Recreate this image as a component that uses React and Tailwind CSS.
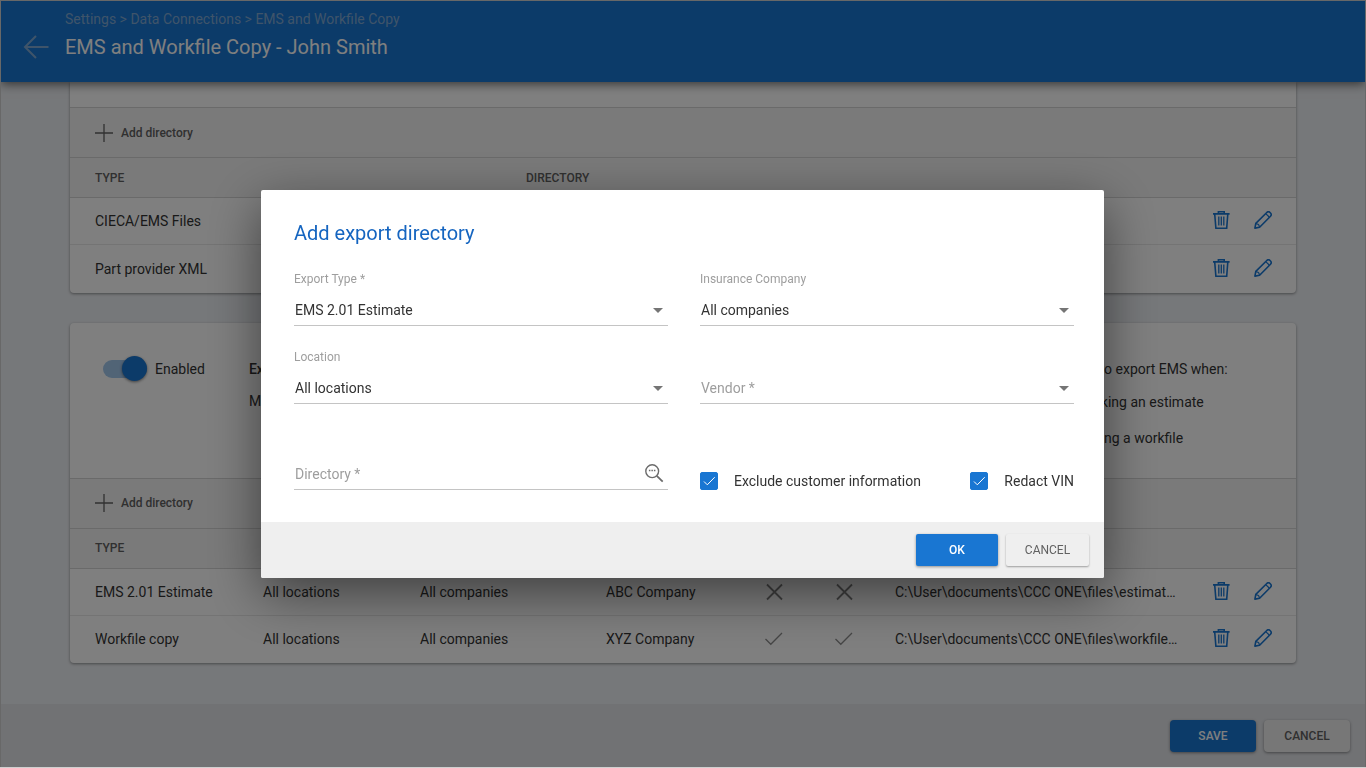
import React, { useState } from "react";

const exportRows = [
  { type: "EMS 2.01 Estimate", location: "All locations", insurance: "All companies", vendor: "ABC Company", exclude: false, redact: false, directory: "C:\\User\\documents\\CCC ONE\\files\\estimates\\export" },
  { type: "Workfile copy", location: "All locations", insurance: "All companies", vendor: "XYZ Company", exclude: true, redact: true, directory: "C:\\User\\documents\\CCC ONE\\files\\workfiles\\export" },
];

const importRows = [
  { type: "CIECA/EMS Files", directory: "C:\\User\\documents\\CCC ONE\\ems" },
  { type: "Part provider XML", directory: "C:\\User\\documents\\CCC ONE\\xml" },
];

const TrashIcon = () => (
  <svg width="17" height="18" viewBox="0 0 17 18" fill="none" stroke="currentColor" strokeWidth="1.6">
    <path d="M0 2.9h16.6M5.4 2.7V.8h5.8v1.9M1.7 3l1.2 14.2h10.8L14.8 3" />
    <path d="M5.8 5.5v9M8.3 5.5v9M10.8 5.5v9" strokeWidth="1.3" />
  </svg>
);

const PencilIcon = () => (
  <svg width="18" height="18" viewBox="0 0 18 18" fill="none" stroke="currentColor" strokeWidth="1.6" strokeLinejoin="round">
    <path d="M.9 17.1l.9-4.7L12.8 1.5a2.3 2.3 0 0 1 3.2 0l.5.5a2.3 2.3 0 0 1 0 3.2L5.6 16.2z" />
    <path d="M12 2.8l3.2 3.2M1.9 12.6l2 .6 1 1 .6 1.9" strokeWidth="1.2" />
  </svg>
);

const CrossIcon = () => (
  <svg className="mx-auto" width="20" height="20" viewBox="0 0 20 20" fill="none" stroke="#808080" strokeWidth="1.8">
    <path d="M3 2.5l15 15M18 2.5L3 17.5" />
  </svg>
);

const TickIcon = () => (
  <svg className="mx-auto" width="20" height="20" viewBox="0 0 20 20" fill="none" stroke="#8c8c8c" strokeWidth="1.3">
    <path d="M1.5 10l5.3 5.3L18 4" />
  </svg>
);

const RowActions = () => (
  <div className="flex items-center justify-end gap-6 pr-6 pb-0.5 text-[#1976d2]">
    <button type="button" aria-label="Delete" className="cursor-pointer"><TrashIcon /></button>
    <button type="button" aria-label="Edit" className="cursor-pointer"><PencilIcon /></button>
  </div>
);

const AddDirectory = () => (
  <div className="flex h-[50px] items-center border-t border-[#d4d4d4] bg-[#f5f5f5] pl-[25px]">
    <button type="button" className="flex cursor-pointer items-center gap-2 text-xs font-medium text-[#616161]">
      <svg width="18" height="18" viewBox="0 0 18 18" stroke="#616161" strokeWidth="1.3">
        <path d="M9 0v18M0 9h18" />
      </svg>
      Add directory
    </button>
  </div>
);

const SelectField = ({ id, label, value, options, onChange, placeholder }) => (
  <div className="flex flex-col justify-end">
    <label htmlFor={id} className={placeholder ? "sr-only" : "text-xs text-[#9e9e9e]"}>{label}</label>
    <div className="relative mt-2">
      <select
        id={id}
        value={value}
        onChange={(e) => onChange(e.target.value)}
        className={`h-[31px] w-full appearance-none border-b border-[#c4c4c4] bg-transparent pl-px text-sm outline-none ${value ? "text-[#333]" : "text-[#9e9e9e]"}`}
      >
        {placeholder && <option value="">{placeholder}</option>}
        {options.map((o) => <option key={o}>{o}</option>)}
      </select>
      <svg className="pointer-events-none absolute top-[13px] right-[5px]" width="10" height="5" viewBox="0 0 10 5">
        <path d="M0 0h10L5 5z" fill="#757575" />
      </svg>
    </div>
  </div>
);

const CheckField = ({ label, checked, onChange }) => (
  <label className="flex cursor-pointer items-center gap-4 text-sm leading-[18px] text-[#333]">
    <span className="relative flex">
      <input
        type="checkbox"
        checked={checked}
        onChange={(e) => onChange(e.target.checked)}
        className="h-[18px] w-[18px] appearance-none rounded-xs border border-[#9e9e9e] checked:border-[#1976d2] checked:bg-[#1976d2]"
      />
      {checked && (
        <svg className="pointer-events-none absolute inset-0" width="18" height="18" viewBox="0 0 18 18" fill="none" stroke="#fff" strokeWidth="1">
          <path d="M4 9.5l3.3 3.3L14.7 5.2" />
        </svg>
      )}
    </span>
    {label}
  </label>
);

const App = () => {
  const [enabled, setEnabled] = useState(true);
  const [open, setOpen] = useState(true);
  const [form, setForm] = useState({
    exportType: "EMS 2.01 Estimate",
    insurance: "All companies",
    location: "All locations",
    vendor: "",
    directory: "",
    exclude: true,
    redact: true,
  });

  const update = (key) => (value) => setForm({ ...form, [key]: value });

  return (
    <div className="relative flex h-screen flex-col overflow-hidden border border-[#d0d0d0] bg-[#edf0f4] font-[Roboto,sans-serif] text-sm text-[#333]">
      <header className="relative z-10 flex h-[81px] shrink-0 items-start bg-[#1976d2] shadow-[0_2px_10px_rgba(0,0,0,0.6)]">
        <a href="#back" aria-label="Back" className="mt-[34px] ml-[22px] text-[#7fa9d4]">
          <svg width="26" height="24" viewBox="0 0 26 24" fill="none" stroke="currentColor" strokeWidth="2">
            <path d="M25.5 12H2M13 1L2 12l11 11" />
          </svg>
        </a>
        <div className="ml-4 pt-2">
          <nav className="text-sm text-[#7fa9d4]">
            <a href="#settings">Settings</a> &gt; <a href="#connections">Data Connections</a> &gt; <a href="#copy">EMS and Workfile Copy</a>
          </nav>
          <h1 className="mt-1 text-xl text-white">EMS and Workfile Copy - John Smith</h1>
        </div>
      </header>

      <main className="flex-1 overflow-hidden px-[69px]">
        <section className="overflow-hidden rounded-b bg-white shadow-[0_1px_3px_rgba(0,0,0,0.4)]">
          <div className="h-[25px]" />
          <AddDirectory />
          <table className="w-full table-fixed text-left">
            <thead>
              <tr className="h-10 border-y border-[#d4d4d4] bg-[#f5f5f5] text-xs text-[#616161]">
                <th className="w-[456px] pl-[25px] font-medium">TYPE</th>
                <th className="font-medium">DIRECTORY</th>
                <th className="w-[118px]" />
              </tr>
            </thead>
            <tbody>
              {importRows.map((row) => (
                <tr key={row.type} className="h-[47px] border-b border-[#e8e8e8] last:h-12 last:border-0">
                  <td className="pl-[25px]">{row.type}</td>
                  <td className="truncate">{row.directory}</td>
                  <td><RowActions /></td>
                </tr>
              ))}
            </tbody>
          </table>
        </section>

        <section className="mt-[30px] overflow-hidden rounded bg-white shadow-[0_1px_3px_rgba(0,0,0,0.4)]">
          <div className="flex h-[155px] items-start">
            <label className="mt-9 ml-[33px] flex cursor-pointer items-center gap-2">
              <input type="checkbox" checked={enabled} onChange={(e) => setEnabled(e.target.checked)} className="peer sr-only" />
              <span className="flex h-[18px] w-[44px] items-center justify-start rounded-full bg-[#bdbdbd] peer-checked:justify-end peer-checked:bg-[#a3c8ed]">
                <span className="h-[25px] w-[25px] rounded-full bg-[#1976d2] shadow-[0_1px_3px_rgba(0,0,0,0.5)]" />
              </span>
              Enabled
            </label>
            <div className="mt-9 ml-11 flex-1">
              <p className="font-medium">Export directories</p>
              <p className="mt-3">Manage where estimates and workfiles are copied.</p>
            </div>
            <div className="mt-9 w-[246px]">
              <p>Prompt to export EMS when:</p>
              <label className="mt-[13px] flex items-center gap-[10px]"><input type="checkbox" className="h-[18px] w-[18px]" />Locking an estimate</label>
              <label className="mt-4 flex items-center gap-[10px]"><input type="checkbox" className="h-[18px] w-[18px]" />Saving a workfile</label>
            </div>
          </div>
          <AddDirectory />
          <table className="w-full table-fixed text-left">
            <thead>
              <tr className="h-10 border-y border-[#d4d4d4] bg-[#f5f5f5] text-xs text-[#616161]">
                <th className="w-[193px] pl-[25px] font-medium">TYPE</th>
                <th className="w-[157px] font-medium">LOCATION</th>
                <th className="w-[186px] font-medium">INSURANCE</th>
                <th className="w-[133px] font-medium">VENDOR</th>
                <th className="w-[70px] text-center font-medium">EXCLUDE</th>
                <th className="w-[70px] text-center font-medium">REDACT</th>
                <th className="pl-4 font-medium">DIRECTORY</th>
                <th className="w-[118px]" />
              </tr>
            </thead>
            <tbody>
              {exportRows.map((row) => (
                <tr key={row.type} className="h-[47px] border-b border-[#e8e8e8] last:h-12 last:border-0">
                  <td className="pl-[25px]">{row.type}</td>
                  <td>{row.location}</td>
                  <td>{row.insurance}</td>
                  <td>{row.vendor}</td>
                  <td>{row.exclude ? <TickIcon /> : <CrossIcon />}</td>
                  <td>{row.redact ? <TickIcon /> : <CrossIcon />}</td>
                  <td className="truncate pl-4">{row.directory}</td>
                  <td><RowActions /></td>
                </tr>
              ))}
            </tbody>
          </table>
        </section>
      </main>

      <footer className="flex h-[63px] shrink-0 items-center justify-end gap-2 bg-[#e2e4e8] pr-[15px] text-xs font-medium">
        <button type="button" className="h-8 w-[86px] cursor-pointer rounded bg-[#1976d2] text-white shadow-[0_1px_3px_rgba(0,0,0,0.4)]">SAVE</button>
        <button type="button" className="h-8 w-[86px] cursor-pointer rounded bg-[#efefef] text-[#616161] shadow-[0_1px_3px_rgba(0,0,0,0.4)]">CANCEL</button>
      </footer>

      {open && (
        <div className="fixed inset-x-0 top-0 bottom-px z-20 flex items-center justify-center bg-black/50 pt-px pr-px">
          <form
            role="dialog"
            aria-labelledby="dialog-title"
            onSubmit={(e) => e.preventDefault()}
            className="w-full max-w-[843px] overflow-hidden rounded-xs bg-white shadow-[0_16px_52px_rgba(0,0,0,0.5)]"
          >
            <div className="pt-[29px] pr-[30px] pb-8 pl-[33px]">
              <h2 id="dialog-title" className="text-xl text-[#1565c0]">Add export directory</h2>
              <div className="mt-6 grid grid-cols-2 gap-x-8 gap-y-[23px]">
                <SelectField id="exportType" label="Export Type *" value={form.exportType} options={["EMS 2.01 Estimate", "Workfile copy"]} onChange={update("exportType")} />
                <SelectField id="insurance" label="Insurance Company" value={form.insurance} options={["All companies"]} onChange={update("insurance")} />
                <SelectField id="location" label="Location" value={form.location} options={["All locations"]} onChange={update("location")} />
                <SelectField id="vendor" label="Vendor" placeholder="Vendor *" value={form.vendor} options={["ABC Company", "XYZ Company"]} onChange={update("vendor")} />
                <div className="mt-8 flex border-b border-[#c4c4c4]">
                  <input
                    type="text"
                    aria-label="Directory"
                    placeholder="Directory *"
                    value={form.directory}
                    onChange={(e) => update("directory")(e.target.value)}
                    className="h-[30px] flex-1 pl-px outline-none placeholder:text-[#9e9e9e]"
                  />
                  <button type="button" aria-label="Browse" className="cursor-pointer pr-1 pb-0.5">
                    <svg width="20" height="20" viewBox="0 0 20 20" fill="none" stroke="#6b6b6b" strokeWidth="1.4">
                      <circle cx="8.2" cy="8.2" r="6.4" />
                      <path d="M12.8 12.8l5.9 5.9" strokeWidth="1.8" />
                      <path d="M4.9 7.6h1.5M7.4 7.6h1.5M9.9 7.6h1.5" strokeWidth="1.5" />
                    </svg>
                  </button>
                </div>
                <div className="flex items-end justify-between">
                  <CheckField label="Exclude customer information" checked={form.exclude} onChange={update("exclude")} />
                  <CheckField label="Redact VIN" checked={form.redact} onChange={update("redact")} />
                </div>
              </div>
            </div>
            <div className="flex h-14 items-center justify-end gap-2 bg-[#efefef] pr-[15px] text-xs">
              <button type="submit" className="h-8 w-[82px] cursor-pointer rounded-xs bg-[#1976d2] font-medium text-white shadow-[0_1px_3px_rgba(0,0,0,0.4)]">OK</button>
              <button type="button" onClick={() => setOpen(false)} className="h-8 w-[83px] cursor-pointer rounded-xs bg-[#efefef] text-[#616161] shadow-[0_1px_2px_rgba(0,0,0,0.35)]">CANCEL</button>
            </div>
          </form>
        </div>
      )}
    </div>
  );
};

export default App;
